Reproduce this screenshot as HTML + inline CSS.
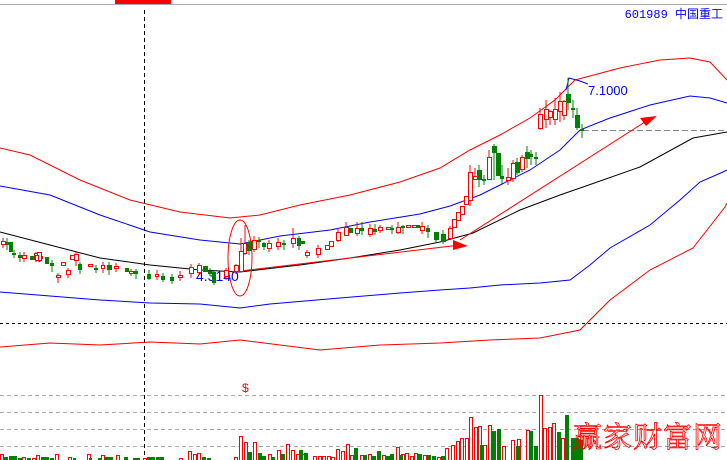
<!DOCTYPE html>
<html><head><meta charset="utf-8"><style>
html,body{margin:0;padding:0;background:#fff;width:727px;height:460px;overflow:hidden}
svg{display:block}
</style></head><body>
<svg width="727" height="460" xmlns="http://www.w3.org/2000/svg" font-family="Liberation Sans, sans-serif">
<rect width="727" height="460" fill="#fff"/>
<line x1="0" y1="4.5" x2="727" y2="4.5" stroke="#aaa"/>
<rect x="115" y="0" width="56" height="4" fill="#f00"/>
<text x="723" y="18" text-anchor="end" font-size="12" fill="#00f" font-family="Liberation Mono, Noto Sans CJK SC, monospace">601989 中国重工</text>
<!-- grid -->
<g stroke="#aaa" stroke-dasharray="4,3" fill="none">
<line x1="0" y1="395.5" x2="727" y2="395.5"/><line x1="0" y1="412.5" x2="727" y2="412.5"/>
<line x1="0" y1="429.5" x2="727" y2="429.5"/><line x1="0" y1="446.5" x2="727" y2="446.5"/>
<line x1="583" y1="130.5" x2="727" y2="130.5" stroke="#888" stroke-dasharray="6,3"/>
</g>
<line x1="144.5" y1="10" x2="144.5" y2="460" stroke="#000" stroke-dasharray="4,3"/>
<line x1="0" y1="323.5" x2="727" y2="323.5" stroke="#000" stroke-dasharray="3,3"/>
<!-- bands -->
<g fill="none" stroke-width="1">
<polyline stroke="#f00" points="0,148 30,155 80,180 130,200 180,212 230,218 260,215 300,205 350,195 400,182 440,168 470,150 500,135 530,118 555,100 575,80 620,68 660,60 690,58 710,62 727,80"/>
<polyline stroke="#00f" points="0,186 50,195 100,215 150,232 200,240 240,244 280,236 330,230 370,222 420,214 450,206 480,195 500,185 530,170 560,150 580,130 610,118 650,105 690,96 710,98 727,103"/>
<polyline stroke="#000" points="0,232 50,245 100,258 150,265 200,270 240,272 300,265 350,258 400,250 440,242 473,233 520,210 560,195 583,187 640,167 693,138 727,132"/>
<polyline stroke="#00f" points="0,292 50,296 100,300 150,303 200,304 240,308 270,304 340,298 400,293 440,290 470,288 500,285 540,283 570,280 590,265 610,248 650,225 680,200 700,182 723,172 727,170"/>
<polyline stroke="#f00" points="0,347 50,343 100,345 150,342 200,344 240,340 280,345 320,350 380,345 440,343 490,340 540,338 580,330 610,300 650,270 693,248 725,207 727,203"/>
<line x1="232" y1="272" x2="460" y2="245" stroke="#f00"/>
<line x1="460" y1="240" x2="648" y2="120" stroke="#f00"/>
<ellipse cx="240" cy="258" rx="12" ry="38" stroke="#f00"/>
<polyline stroke="#00f" points="566,90 569,78 580,81 588,84"/>
</g>
<polygon points="453,240 468,246 453,250" fill="#f00"/>
<polygon points="640,118 657,116 646,126" fill="#f00"/>
<text x="588" y="95" font-size="13" fill="#00f">7.1000</text>
<text x="196" y="281" font-size="14" fill="#00f">4.3140</text>
<!-- candles -->
<g stroke-width="1" shape-rendering="crispEdges">
<g stroke="#f00" fill="#fff">
<line x1="3" y1="238" x2="3" y2="248"/><rect x="1.5" y="241.5" width="4" height="3"/>
<line x1="40" y1="252" x2="40" y2="262"/><rect x="38.5" y="256.5" width="4" height="2"/>
<line x1="24" y1="252" x2="24" y2="262"/><rect x="22.5" y="255.5" width="4" height="2"/>
<line x1="36" y1="252" x2="36" y2="262"/><rect x="34.5" y="253.5" width="3" height="6"/>
<line x1="39" y1="252" x2="39" y2="262"/><rect x="37.5" y="252.5" width="4" height="8"/>
<rect x="22.5" y="255.5" width="4" height="3"/>
<rect x="70.5" y="255.5" width="4" height="4"/>
<rect x="61.5" y="262.5" width="4" height="3"/>
<line x1="76" y1="252" x2="76" y2="266"/><rect x="74.5" y="254.5" width="4" height="6"/>
<rect x="35.5" y="255.5" width="3" height="5"/>
<line x1="58" y1="273" x2="58" y2="283"/><rect x="56.5" y="275.5" width="4" height="2"/>
<line x1="68" y1="268" x2="68" y2="278"/><rect x="66.5" y="270.5" width="4" height="4"/>
<rect x="88.5" y="264.5" width="4" height="2"/>
<line x1="103" y1="262" x2="103" y2="273"/><rect x="101.5" y="265.5" width="3" height="3"/>
<line x1="116" y1="263" x2="116" y2="272"/><rect x="114.5" y="266.5" width="4" height="2"/>
<line x1="131" y1="269" x2="131" y2="276"/><rect x="129.5" y="271.5" width="4" height="2"/>
<line x1="157" y1="270" x2="157" y2="280"/><rect x="155.5" y="274.5" width="3" height="2"/>
<line x1="180" y1="271" x2="180" y2="281"/><rect x="178.5" y="275.5" width="4" height="2"/>
<line x1="191" y1="264" x2="191" y2="278"/><rect x="189.5" y="267.5" width="4" height="6"/>
<line x1="199" y1="263" x2="199" y2="275"/><rect x="197.5" y="265.5" width="4" height="7"/>
<line x1="226" y1="268" x2="226" y2="280"/><rect x="224.5" y="270.5" width="4" height="6"/>
<line x1="236" y1="264" x2="236" y2="274"/><rect x="234.5" y="265.5" width="4" height="6"/>
<line x1="241" y1="238" x2="241" y2="272"/><rect x="239.5" y="251.5" width="4" height="20"/>
<line x1="245" y1="225" x2="245" y2="255"/><rect x="243.5" y="243.5" width="3" height="10"/>
<line x1="254" y1="236" x2="254" y2="252"/><rect x="252.5" y="240.5" width="4" height="9"/>
<line x1="269" y1="240" x2="269" y2="252"/><rect x="267.5" y="243.5" width="4" height="5"/>
<line x1="278" y1="238" x2="278" y2="250"/><rect x="276.5" y="242.5" width="4" height="4"/>
<line x1="293" y1="228" x2="293" y2="248"/><rect x="291.5" y="238.5" width="4" height="5"/>
<line x1="307" y1="250" x2="307" y2="258"/><rect x="305.5" y="252.5" width="4" height="3"/>
<line x1="318" y1="245" x2="318" y2="258"/><rect x="316.5" y="248.5" width="4" height="6"/>
<rect x="325.5" y="245.5" width="4" height="4"/>
<rect x="329.5" y="241.5" width="4" height="5"/>
<line x1="338" y1="228" x2="338" y2="242"/><rect x="336.5" y="232.5" width="4" height="8"/>
<line x1="346" y1="222" x2="346" y2="236"/><rect x="344.5" y="227.5" width="4" height="8"/>
<line x1="357" y1="222" x2="357" y2="236"/><rect x="355.5" y="228.5" width="4" height="5"/>
<line x1="370" y1="224" x2="370" y2="237"/><rect x="368.5" y="228.5" width="4" height="6"/>
<line x1="380" y1="225" x2="380" y2="233"/><rect x="378.5" y="227.5" width="4" height="3"/>
<rect x="386.5" y="227.5" width="4" height="2"/>
<line x1="398" y1="222" x2="398" y2="234"/><rect x="396.5" y="227.5" width="4" height="5"/>
<rect x="406.5" y="225.5" width="4" height="2"/><rect x="412.5" y="225.5" width="4" height="2"/>
<line x1="422" y1="222" x2="422" y2="234"/><rect x="420.5" y="226.5" width="4" height="4"/>
<line x1="450" y1="226" x2="450" y2="240"/><rect x="448.5" y="228.5" width="4" height="10"/>
<rect x="452.5" y="219.5" width="4" height="8"/>
<rect x="456.5" y="212.5" width="4" height="8"/>
<rect x="460.5" y="206.5" width="4" height="8"/>
<line x1="470" y1="165" x2="470" y2="206"/><rect x="468.5" y="172.5" width="4" height="28"/>
<rect x="464.5" y="196.5" width="4" height="8"/>
<line x1="475" y1="168" x2="475" y2="178"/><rect x="473.5" y="176.5" width="4" height="3"/>
<line x1="489" y1="150" x2="489" y2="180"/><rect x="487.5" y="157.5" width="4" height="22"/>
<line x1="508" y1="168" x2="508" y2="185"/><rect x="506.5" y="177.5" width="4" height="3"/>
<line x1="513" y1="160" x2="513" y2="182"/><rect x="511.5" y="163.5" width="4" height="15"/>
<line x1="522" y1="155" x2="522" y2="172"/><rect x="520.5" y="157.5" width="4" height="12"/>
<line x1="540" y1="108" x2="540" y2="130"/><rect x="538.5" y="114.5" width="4" height="14"/>
<line x1="546" y1="100" x2="546" y2="128"/><rect x="544.5" y="109.5" width="4" height="10"/>
<line x1="550" y1="110" x2="550" y2="125"/><rect x="548.5" y="111.5" width="4" height="6"/>
<line x1="555" y1="98" x2="555" y2="125"/><rect x="553.5" y="109.5" width="4" height="10"/>
<line x1="560" y1="92" x2="560" y2="122"/><rect x="558.5" y="101.5" width="4" height="10"/>
<line x1="564" y1="100" x2="564" y2="120"/><rect x="562.5" y="101.5" width="4" height="14"/>
</g>
<g stroke="#008000" fill="#008000">
<line x1="7" y1="238" x2="7" y2="250"/><rect x="5.5" y="242.5" width="3" height="2"/>
<rect x="9.5" y="242.5" width="3" height="9"/>
<line x1="14" y1="250" x2="14" y2="258"/><rect x="12.5" y="253.5" width="3" height="1"/>
<line x1="20" y1="252" x2="20" y2="262"/><rect x="18.5" y="255.5" width="3" height="2"/>
<rect x="30.5" y="256.5" width="3" height="3"/>
<rect x="45.5" y="257.5" width="3" height="6"/>
<line x1="52" y1="260" x2="52" y2="272"/><rect x="50.5" y="263.5" width="3" height="2"/>
<line x1="80" y1="262" x2="80" y2="274"/><rect x="78.5" y="264.5" width="3" height="5"/>
<line x1="96" y1="265" x2="96" y2="273"/><rect x="94.5" y="268.5" width="3" height="1"/>
<line x1="109" y1="262" x2="109" y2="275"/><rect x="107.5" y="265.5" width="4" height="4"/>
<rect x="125.5" y="268.5" width="3" height="3"/>
<line x1="136" y1="269" x2="136" y2="279"/><rect x="134.5" y="271.5" width="3" height="2"/>
<line x1="149" y1="270" x2="149" y2="280"/><rect x="147.5" y="274.5" width="3" height="4"/>
<line x1="163" y1="273" x2="163" y2="282"/><rect x="161.5" y="276.5" width="3" height="3"/>
<line x1="172" y1="274" x2="172" y2="284"/><rect x="170.5" y="277.5" width="3" height="3"/>
<rect x="203.5" y="266.5" width="4" height="5"/>
<line x1="210" y1="268" x2="210" y2="276"/><rect x="208.5" y="271.5" width="3" height="2"/>
<line x1="214" y1="271" x2="214" y2="285"/><rect x="212.5" y="272.5" width="3" height="10"/>
<line x1="249" y1="240" x2="249" y2="255"/><rect x="247.5" y="242.5" width="4" height="8"/>
<line x1="259" y1="237" x2="259" y2="248"/><rect x="257.5" y="240.5" width="3" height="1"/>
<line x1="264" y1="242" x2="264" y2="250"/><rect x="262.5" y="243.5" width="3" height="3"/>
<line x1="284" y1="240" x2="284" y2="250"/><rect x="282.5" y="243.5" width="3" height="1"/>
<line x1="299" y1="236" x2="299" y2="250"/><rect x="297.5" y="238.5" width="3" height="7"/>
<rect x="301.5" y="241.5" width="3" height="2"/>
<rect x="349.5" y="228.5" width="3" height="4"/>
<line x1="362" y1="222" x2="362" y2="235"/><rect x="360.5" y="228.5" width="3" height="2"/>
<line x1="375" y1="224" x2="375" y2="235"/><rect x="373.5" y="229.5" width="3" height="2"/>
<line x1="392" y1="225" x2="392" y2="234"/><rect x="390.5" y="228.5" width="3" height="1"/>
<line x1="403" y1="225" x2="403" y2="234"/><rect x="401.5" y="226.5" width="3" height="1"/>
<rect x="416.5" y="225.5" width="3" height="2"/>
<line x1="428" y1="225" x2="428" y2="238"/><rect x="426.5" y="228.5" width="3" height="3"/>
<line x1="436" y1="232" x2="436" y2="242"/><rect x="434.5" y="232.5" width="4" height="7"/>
<line x1="443" y1="230" x2="443" y2="244"/><rect x="441.5" y="234.5" width="4" height="7"/>
<line x1="479" y1="165" x2="479" y2="187"/><rect x="477.5" y="170.5" width="4" height="9"/>
<line x1="484" y1="175" x2="484" y2="185"/><rect x="482.5" y="179.5" width="3" height="1"/>
<line x1="494" y1="144" x2="494" y2="180"/><rect x="492.5" y="146.5" width="4" height="6"/>
<rect x="496.5" y="153.5" width="4" height="22"/>
<line x1="502" y1="165" x2="502" y2="185"/><rect x="500.5" y="176.5" width="3" height="2"/>
<line x1="517" y1="158" x2="517" y2="175"/><rect x="515.5" y="162.5" width="4" height="10"/>
<line x1="527" y1="146" x2="527" y2="168"/><rect x="525.5" y="152.5" width="4" height="6"/>
<line x1="531" y1="150" x2="531" y2="165"/><rect x="529.5" y="154.5" width="3" height="2"/>
<line x1="536" y1="152" x2="536" y2="165"/><rect x="534.5" y="157.5" width="3" height="1"/>
<line x1="568" y1="78" x2="568" y2="110"/><rect x="566.5" y="94.5" width="4" height="8"/>
<line x1="573" y1="100" x2="573" y2="118"/><rect x="571.5" y="108.5" width="3" height="1"/>
<line x1="577" y1="108" x2="577" y2="130"/><rect x="575.5" y="115.5" width="4" height="12"/>
<line x1="582" y1="124" x2="582" y2="138"/><rect x="580.5" y="129.5" width="3" height="1"/>
</g>
</g>
<text x="242" y="392" font-size="12" fill="#f00">$</text>
<!-- volume -->
<g shape-rendering="crispEdges">
<g fill="#fff" stroke="#f00">
<rect x="0.5" y="454.5" width="3" height="6"/><rect x="22.5" y="457.5" width="3" height="3"/><rect x="32.5" y="458.5" width="3" height="2"/><rect x="36.5" y="455.5" width="3" height="5"/><rect x="55.5" y="454.5" width="3" height="6"/><rect x="68.5" y="457.5" width="3" height="3"/><rect x="87.5" y="454.5" width="3" height="6"/><rect x="101.5" y="455.5" width="3" height="5"/><rect x="116.5" y="455.5" width="3" height="5"/><rect x="143.5" y="458.5" width="3" height="2"/><rect x="179.5" y="458.5" width="3" height="2"/><rect x="188.5" y="451.5" width="3" height="9"/><rect x="193.5" y="454.5" width="3" height="6"/><rect x="197.5" y="453.5" width="3" height="7"/><rect x="234.5" y="457.5" width="3" height="3"/><rect x="239.5" y="436.5" width="3" height="24"/><rect x="244.5" y="442.5" width="3" height="18"/><rect x="253.5" y="442.5" width="3" height="18"/><rect x="268.5" y="454.5" width="3" height="6"/><rect x="277.5" y="450.5" width="3" height="10"/><rect x="286.5" y="444.5" width="3" height="16"/><rect x="291.5" y="450.5" width="3" height="10"/><rect x="296.5" y="454.5" width="3" height="6"/><rect x="301.5" y="454.5" width="3" height="6"/><rect x="313.5" y="456.5" width="3" height="4"/><rect x="318.5" y="456.5" width="3" height="4"/><rect x="322.5" y="456.5" width="3" height="4"/><rect x="327.5" y="456.5" width="3" height="4"/><rect x="331.5" y="457.5" width="3" height="3"/><rect x="336.5" y="449.5" width="3" height="11"/><rect x="341.5" y="451.5" width="3" height="9"/><rect x="346.5" y="444.5" width="3" height="16"/><rect x="350.5" y="455.5" width="3" height="5"/><rect x="360.5" y="455.5" width="3" height="5"/><rect x="368.5" y="454.5" width="3" height="6"/><rect x="382.5" y="455.5" width="3" height="5"/><rect x="396.5" y="447.5" width="3" height="13"/><rect x="401.5" y="454.5" width="3" height="6"/><rect x="405.5" y="453.5" width="3" height="7"/><rect x="410.5" y="456.5" width="3" height="4"/><rect x="414.5" y="453.5" width="3" height="7"/><rect x="423.5" y="455.5" width="3" height="5"/><rect x="437.5" y="457.5" width="3" height="3"/><rect x="445.5" y="448.5" width="3" height="12"/><rect x="451.5" y="445.5" width="3" height="15"/><rect x="456.5" y="441.5" width="3" height="19"/><rect x="460.5" y="438.5" width="3" height="22"/><rect x="465.5" y="438.5" width="3" height="22"/><rect x="469.5" y="417.5" width="3" height="43"/><rect x="474.5" y="427.5" width="3" height="33"/><rect x="478.5" y="426.5" width="3" height="34"/><rect x="483.5" y="445.5" width="3" height="15"/><rect x="488.5" y="425.5" width="3" height="35"/><rect x="502.5" y="446.5" width="3" height="14"/><rect x="511.5" y="440.5" width="3" height="20"/><rect x="517.5" y="439.5" width="3" height="21"/><rect x="526.5" y="430.5" width="3" height="30"/><rect x="539.5" y="395.5" width="3" height="65"/><rect x="543.5" y="428.5" width="3" height="32"/><rect x="548.5" y="427.5" width="3" height="33"/><rect x="552.5" y="423.5" width="3" height="37"/><rect x="561.5" y="438.5" width="3" height="22"/></g>
<g fill="#008000">
<rect x="4" y="457" width="4" height="3"/><rect x="9" y="456" width="4" height="4"/><rect x="13" y="456" width="4" height="4"/><rect x="18" y="458" width="4" height="2"/><rect x="27" y="458" width="4" height="2"/><rect x="41" y="457" width="8" height="3"/><rect x="50" y="458" width="4" height="2"/><rect x="73" y="458" width="3" height="2"/><rect x="89" y="458" width="3" height="2"/><rect x="98" y="458" width="3" height="2"/><rect x="105" y="457" width="8" height="3"/><rect x="124" y="457" width="4" height="3"/><rect x="133" y="458" width="7" height="2"/><rect x="147" y="457" width="8" height="3"/><rect x="156" y="457" width="8" height="3"/><rect x="202" y="457" width="4" height="3"/><rect x="207" y="458" width="4" height="2"/><rect x="248" y="452" width="4" height="8"/><rect x="258" y="453" width="4" height="7"/><rect x="262" y="456" width="4" height="4"/><rect x="271" y="457" width="4" height="3"/><rect x="281" y="454" width="4" height="6"/><rect x="299" y="450" width="4" height="10"/><rect x="304" y="453" width="4" height="7"/><rect x="354" y="448" width="4" height="12"/><rect x="363" y="455" width="4" height="5"/><rect x="372" y="456" width="4" height="4"/><rect x="377" y="451" width="4" height="9"/><rect x="386" y="456" width="4" height="4"/><rect x="390" y="454" width="4" height="6"/><rect x="399" y="455" width="4" height="5"/><rect x="418" y="454" width="4" height="6"/><rect x="427" y="455" width="4" height="5"/><rect x="432" y="456" width="4" height="4"/><rect x="441" y="456" width="4" height="4"/><rect x="480" y="445" width="4" height="15"/><rect x="492" y="431" width="4" height="29"/><rect x="497" y="429" width="4" height="31"/><rect x="516" y="446" width="4" height="14"/><rect x="534" y="446" width="4" height="14"/><rect x="529" y="431" width="4" height="29"/><rect x="557" y="432" width="4" height="28"/><rect x="565" y="415" width="4" height="45"/><rect x="571" y="438" width="8" height="22"/><rect x="579" y="440" width="4" height="20"/></g>
</g>
<text x="573" y="447" font-size="29" fill="none" stroke="#f00" stroke-width="0.8" letter-spacing="1" font-family="Noto Serif CJK SC, serif">赢家财富网</text>
</svg>
</body></html>
